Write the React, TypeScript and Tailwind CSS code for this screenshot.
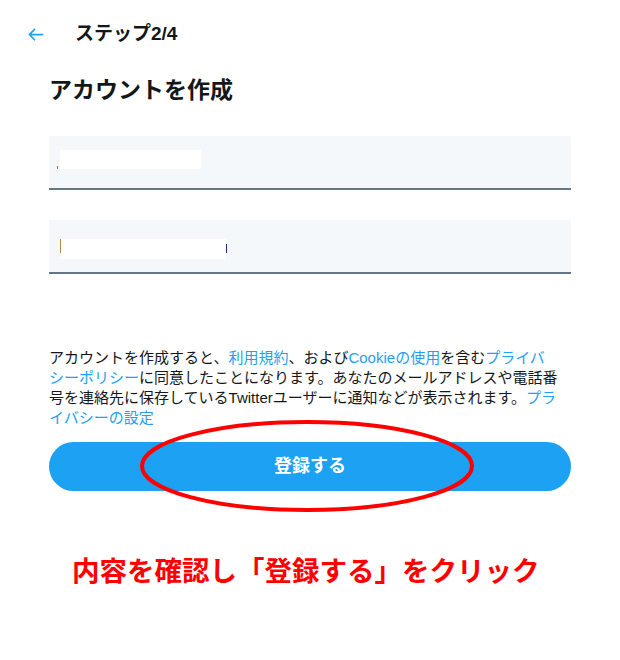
import React from 'react';

const font = "font-['Liberation_Sans','Noto_Sans_CJK_JP',sans-serif]";

const BackArrow = () => (
  <svg viewBox="0 0 24 24" className="w-[21px] h-[21px] fill-[#1da1f2]">
    <path d="M20 11H7.414l4.293-4.293c.39-.39.39-1.023 0-1.414s-1.023-.39-1.414 0l-6 6c-.39.39-.39 1.023 0 1.414l6 6c.195.195.45.293.707.293s.512-.098.707-.293c.39-.39.39-1.023 0-1.414L7.414 13H20c.553 0 1-.447 1-1s-.447-1-1-1z" />
  </svg>
);

const Link = ({ children }: { children: React.ReactNode }) => (
  <span className="text-[#1da1f2]">{children}</span>
);

export default function App() {
  return (
    <div className={`w-[620px] h-[660px] bg-white text-[#14171a] ${font}`}>
      {/* header */}
      <div className="flex items-center h-[24px] mt-[22px] pl-[25px]">
        <BackArrow />
        <span className="ml-[29px] text-[19px] font-bold">ステップ2/4</span>
      </div>

      <div className="px-[49px]">
        <h1 className="mt-[29px] text-[23px] leading-[30px] font-bold">アカウントを作成</h1>

        {/* name field (redacted) */}
        <div className="mt-[31px] h-[54px] bg-[#f5f8fa] border-b-2 border-[#657786] pt-[14px] pl-[8px]">
          <div className="flex items-end gap-[2px]">
            <div className="w-[1px] h-[3px] bg-[#a0773a]" />
            <div className="w-[141px] h-[19px] bg-white" />
          </div>
        </div>

        {/* phone / email field (redacted) */}
        <div className="mt-[30px] h-[54px] bg-[#f5f8fa] border-b-2 border-[#657786] pt-[19px] pl-[11px]">
          <div className="flex items-start">
            <div className="w-[1px] h-[14px] bg-[#b08a4a]" />
            <div className="w-[165px] h-[20px] bg-white" />
            <div className="w-[1px] h-[9px] mt-[5px] bg-[#1f2f7a]" />
          </div>
        </div>

        <p className="mt-[74px] text-[15px] leading-[20px] w-[522px]">
          アカウントを作成すると、<Link>利用規約</Link>、および<Link>Cookieの使用</Link>を含む<Link>プライバ<br />シーポリシー</Link>に同意したことになります。あなたのメールアドレスや電話番<br />号を連絡先に保存しているTwitterユーザーに通知などが表示されます。<Link>プラ<br />イバシーの設定</Link>
        </p>

        <div className="relative mt-[14px]">
          <button className="w-full h-[49px] rounded-full bg-[#1da1f2] text-white text-[18px] font-bold">
            登録する
          </button>
          <svg
            className="absolute left-[91px] top-[-22px] w-[334px] h-[92px] pointer-events-none"
            viewBox="0 0 334 92"
          >
            <ellipse cx="167" cy="46" rx="165" ry="44" fill="none" stroke="#ff0000" strokeWidth="4" />
          </svg>
        </div>

        <p className="mt-[63px] pl-[23px] text-[27.5px] leading-[36px] font-bold text-[#ff0000]">
          内容を確認し「登録する」をクリック
        </p>
      </div>
    </div>
  );
}
